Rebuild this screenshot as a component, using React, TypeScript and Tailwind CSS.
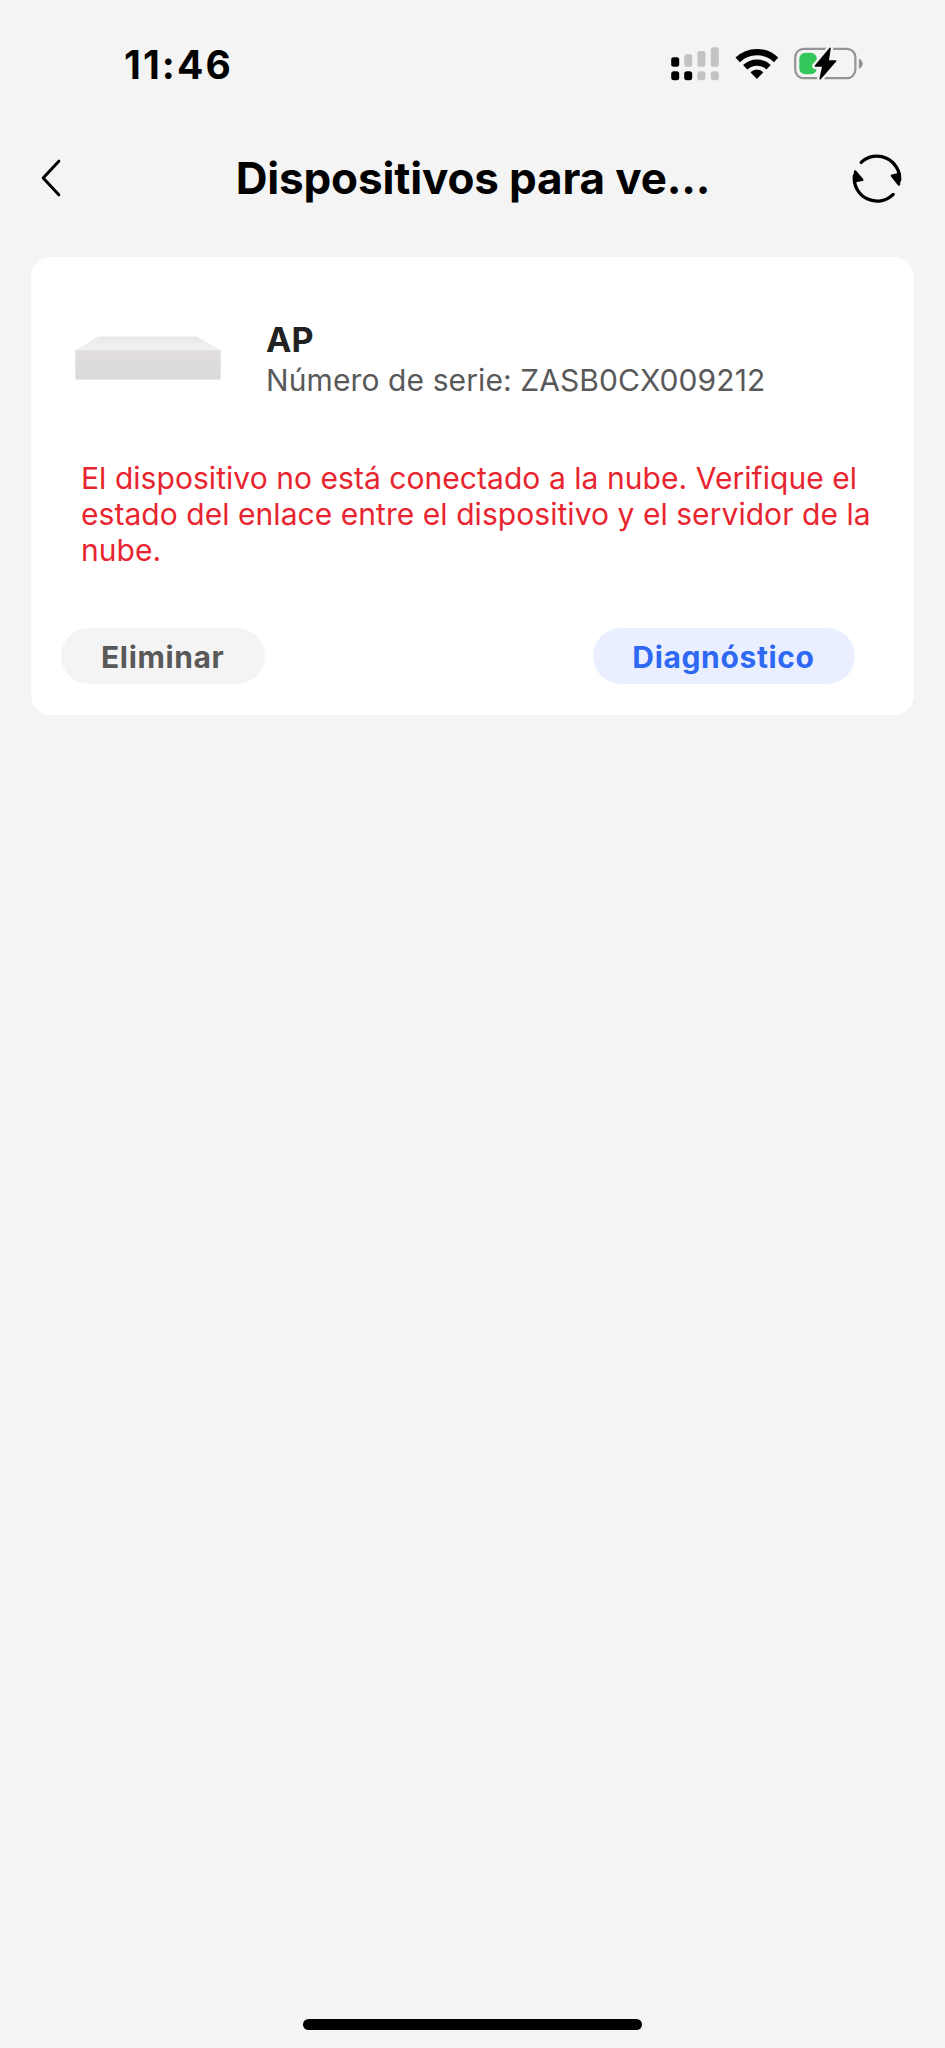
import type { ReactNode } from "react"

const signalBars = [
  { x: 0.2, y: 10.2, h: 9.6, strong: true, simStrong: true },
  { x: 13.2, y: 7.2, h: 12.6, strong: false, simStrong: true },
  { x: 26.4, y: 4, h: 15.8, strong: false, simStrong: false },
  { x: 39.8, y: 0.2, h: 19.6, strong: false, simStrong: false },
]

function SignalIcon() {
  return (
    <svg width="49" height="34" viewBox="0 0 49 34">
      {signalBars.map((bar) => (
        <g key={bar.x}>
          <rect x={bar.x} y={bar.y} width="8" height={bar.h} rx="2.4" fill={bar.strong ? "#000" : "#c3c3c3"} />
          <rect x={bar.x} y="24.2" width="8" height="9" rx="2.6" fill={bar.simStrong ? "#000" : "#c3c3c3"} />
        </g>
      ))}
    </svg>
  )
}

function WifiIcon() {
  return (
    <svg width="44" height="34" viewBox="0 0 44 34" fill="none" stroke="#000">
      <path d="M2.7 12.9A27.6 27.6 0 0 1 41.1 12.9" strokeWidth="6.4" />
      <path d="M10.2 20.3A16.8 16.8 0 0 1 33.6 20.3" strokeWidth="6.2" />
      <path d="M21.9 31.4L16 25.4A8.6 8.6 0 0 1 27.8 25.4Z" fill="#000" strokeWidth="1" strokeLinejoin="round" />
    </svg>
  )
}

const boltPath = "M36 1.4L21.4 19H29L26.2 31.6L41.6 14H34Z"

function BatteryIcon() {
  return (
    <svg width="70" height="34" viewBox="0 0 70 34">
      <rect x="1.2" y="1.8" width="60.2" height="29.4" rx="8.6" fill="none" stroke="#949494" strokeWidth="2.2" />
      <path d="M64.8 11.8C70 13.4 70 20.2 64.8 21.8Z" fill="#949494" />
      <rect x="5.3" y="5.8" width="17.5" height="21.4" rx="6" fill="#34c759" />
      <path d={boltPath} fill="#f4f4f4" stroke="#f4f4f4" strokeWidth="6.4" strokeLinejoin="round" />
      <path d={boltPath} fill="#000" stroke="#000" strokeWidth="1.6" strokeLinejoin="round" />
    </svg>
  )
}

function BackIcon() {
  return (
    <svg width="24" height="40" viewBox="0 0 24 40" fill="none" stroke="#000" strokeWidth="3">
      <path d="M18.8 3.2L3.2 20L18.8 36.8" strokeLinecap="round" strokeLinejoin="round" />
    </svg>
  )
}

function RefreshIcon() {
  return (
    <svg width="52" height="52" viewBox="0 0 52 52" fill="none" stroke="#000" strokeLinecap="round" strokeLinejoin="round">
      <path d="M10.2 10.4A22.8 22.8 0 0 1 48.7 28" strokeWidth="3.3" />
      <path d="M42.2 42.4A22.8 22.8 0 0 1 3.4 23.6" strokeWidth="3.3" />
      <path d="M41 23.8L48.6 22L47.9 32.4Z" fill="#000" strokeWidth="2.6" />
      <path d="M4.2 19.6L11.2 27.8L3.8 29.2Z" fill="#000" strokeWidth="2.6" />
    </svg>
  )
}

function DeviceImage() {
  return (
    <svg width="146" height="44" viewBox="0 0 146 44">
      <defs>
        <linearGradient id="deviceTop" x1="0" y1="0" x2="0" y2="1">
          <stop offset="0" stopColor="#e7e7e7" />
          <stop offset="1" stopColor="#f2f2f2" />
        </linearGradient>
        <linearGradient id="deviceFront" x1="0" y1="0" x2="0" y2="1">
          <stop offset="0" stopColor="#e1dedd" />
          <stop offset="1" stopColor="#d9d9d9" />
        </linearGradient>
      </defs>
      <path d="M23.5 0.5H121.5L145.5 14H0.5Z" fill="url(#deviceTop)" />
      <rect x="0.3" y="14" width="145.4" height="29.6" fill="url(#deviceFront)" />
    </svg>
  )
}

function PillButton({ className, children }: { className: string; children: ReactNode }) {
  return (
    <button
      type="button"
      className={`flex h-14 items-center justify-center rounded-full pt-0.5 text-[30px] leading-9 font-bold tracking-[0.65px] ${className}`}
    >
      {children}
    </button>
  )
}

export default function App() {
  return (
    <main className="flex h-[2048px] w-[945px] flex-col bg-[#f4f4f4] font-['Inter','Liberation_Sans',sans-serif] text-black">
      {/* Status bar */}
      <div className="flex h-[128px] items-center justify-between pr-[81px] pl-[124px]">
        <span className="text-[39px] leading-none font-bold tracking-[2.1px]">11:46</span>
        <div className="flex items-center">
          <SignalIcon />
          <div className="ml-[14.5px]">
            <WifiIcon />
          </div>
          <div className="ml-[15.5px]">
            <BatteryIcon />
          </div>
        </div>
      </div>

      {/* Nav bar */}
      <header className="flex h-[100px] items-center justify-between pr-[42px] pl-10">
        <button type="button" aria-label="Atrás" className="flex w-[55px]">
          <BackIcon />
        </button>
        <h1 className="text-[44px] leading-none font-bold tracking-[-0.15px]">Dispositivos para ve...</h1>
        <button type="button" aria-label="Actualizar">
          <RefreshIcon />
        </button>
      </header>

      {/* Device card */}
      <section className="mt-[29px] mr-[31px] ml-[30.5px] h-[458px] rounded-[20px] bg-white pt-[62px]">
        <div className="flex items-center pl-[44.5px]">
          <div className="pb-[3px]">
            <DeviceImage />
          </div>
          <div className="ml-[45px]">
            <h2 className="text-[34px] leading-[41px] font-bold text-[#222222]">AP</h2>
            <p className="text-[30px] leading-10 tracking-[0.1px] text-[#595959]">Número de serie: ZASB0CX009212</p>
          </div>
        </div>

        <p className="mt-[60px] pr-8 pl-[50.5px] text-[30px] leading-9 tracking-[0.05px] text-[#e8252f]">
          El dispositivo no está conectado a la nube. Verifique el estado del enlace entre el dispositivo y el servidor de
          la nube.
        </p>

        <div className="mt-[60px] flex justify-between pr-[59.5px] pl-[30.5px]">
          <PillButton className="w-[203.5px] bg-[#f4f4f4] text-[#595959]">Eliminar</PillButton>
          <PillButton className="w-[262px] bg-[#e9efff] text-[#2f68f2]">Diagnóstico</PillButton>
        </div>
      </section>

      {/* Home indicator */}
      <div className="mx-auto mt-auto mb-[18px] h-[11px] w-[339px] rounded-full bg-black" />
    </main>
  )
}
